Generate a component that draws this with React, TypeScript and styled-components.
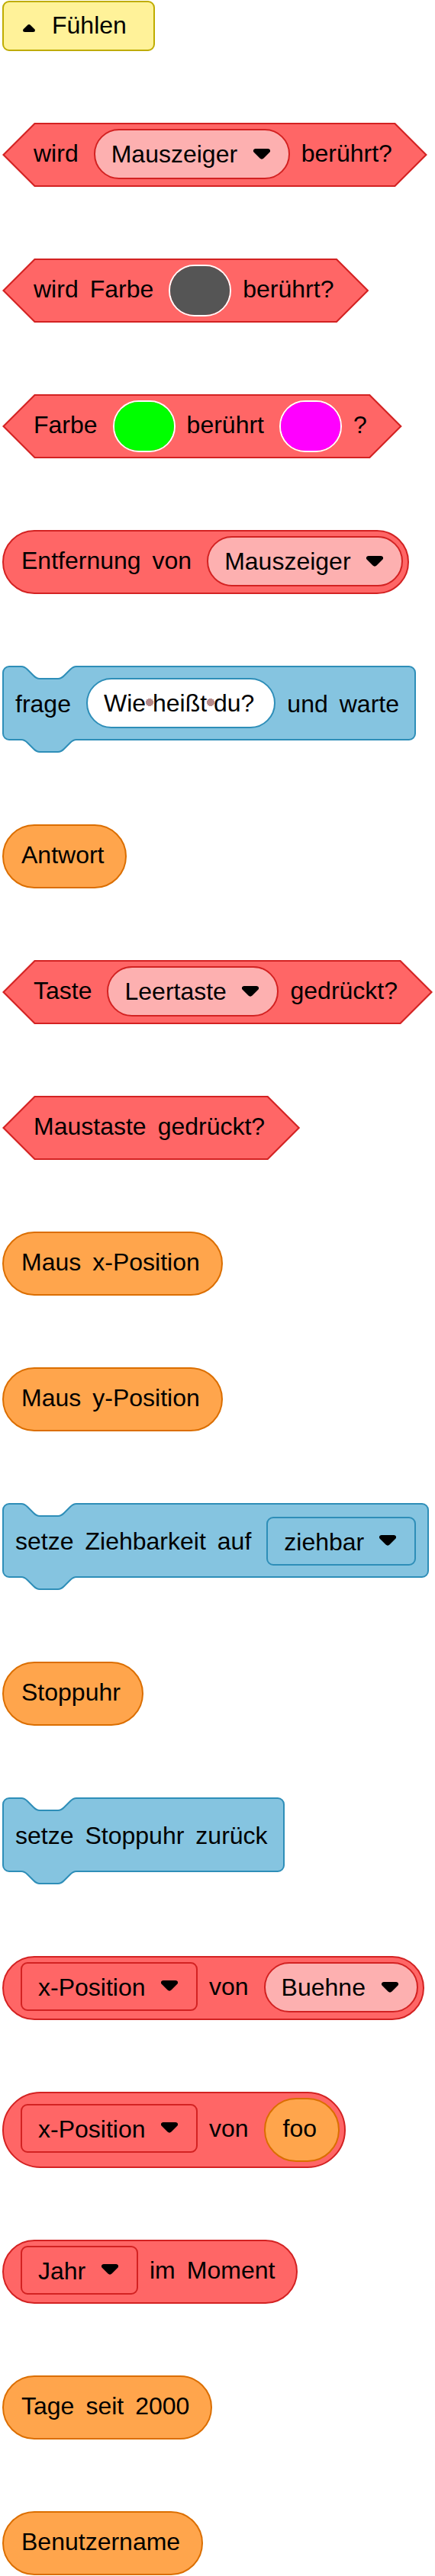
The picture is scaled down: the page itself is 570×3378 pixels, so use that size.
import React from "react";
import styled, { createGlobalStyle, css } from "styled-components";

const colors = {
  red: { fill: "#ff6666", line: "#d32222", field: "#fdb0b0" },
  orange: { fill: "#ffa54c", line: "#db6e00", field: "#ffcc99" },
  blue: { fill: "#85c4e0", line: "#2e8eb8", field: "#ffffff" },
};
type Tone = keyof typeof colors;

const GlobalStyle = createGlobalStyle`
  *, *::before, *::after { box-sizing: border-box; }
  body { margin: 0; background: #ffffff; }
  body, button, input, select {
    color: #000000;
    font-family: "Liberation Sans", Arial, sans-serif;
    font-size: 32px;
    line-height: 36px;
  }
`;

const Palette = styled.main`
  display: flex;
  flex-direction: column;
  align-items: flex-start;
  gap: 94px;
  padding: 1px 3px;
`;

const CategoryButton = styled.button`
  display: flex;
  align-items: center;
  gap: 22px;
  height: 66px;
  padding: 0 35px 2px 25px;
  border: 2px solid #bfac00;
  border-radius: 9px;
  background: #fff299;
`;

const CategoryArrow = styled.svg`
  width: 16px;
  height: 10px;
  margin-top: 8px;
`;

const blockRow = css`
  display: flex;
  align-items: center;
  flex-shrink: 0;
  gap: 15px;
  white-space: nowrap;
`;

const Reporter = styled.div<{ $tone: Tone; $startsWithField?: boolean; $endsWithField?: boolean }>`
  ${blockRow}
  min-height: 84px;
  padding: 6px ${(p) => (p.$endsWithField ? 6 : 23)}px 6px ${(p) => (p.$startsWithField ? 22 : 23)}px;
  border: 2px solid ${(p) => colors[p.$tone].line};
  border-radius: 50px;
  background: ${(p) => colors[p.$tone].fill};
`;

const Predicate = styled.div`
  ${blockRow}
  position: relative;
  isolation: isolate;
  min-height: 84px;
  padding: 8px 41px;
  background: ${colors.red.line};
  clip-path: polygon(0 50%, 42px 0, calc(100% - 42px) 0, 100% 50%, calc(100% - 42px) 100%, 42px 100%);

  &::before {
    content: "";
    position: absolute;
    inset: 0;
    z-index: -1;
    background: ${colors.red.fill};
    clip-path: polygon(
      3px 50%, 43px 2px, calc(100% - 43px) 2px,
      calc(100% - 3px) 50%, calc(100% - 43px) calc(100% - 2px), 43px calc(100% - 2px)
    );
  }
`;

const CommandBody = styled.div`
  ${blockRow}
  position: relative;
  min-height: 98px;
  margin-bottom: 16px;
  padding: 16px 15px 10px 15px;
  border: 2px solid ${colors.blue.line};
  border-radius: 9px;
  background: ${colors.blue.fill};
`;

const Connector = styled.svg<{ $edge: "top" | "bottom" }>`
  position: absolute;
  left: 23px;
  top: ${(p) => (p.$edge === "top" ? "-2px" : "100%")};
  width: 72px;
  height: 18px;
`;

const Label = styled.span`
  display: flex;
  gap: 15px;
  margin-right: 5px;
  padding-bottom: 4px;
`;

const FieldFrame = styled.span<{ $tone: Tone; $round?: boolean }>`
  display: flex;
  align-items: center;
  gap: 20px;
  height: ${(p) => (p.$round ? 66 : 64)}px;
  margin-bottom: ${(p) => (p.$round ? 2 : 4)}px;
  padding: ${(p) => (p.$round ? 0 : 2)}px 24px 0 21px;
  border: 2px solid ${(p) => colors[p.$tone].line};
  border-radius: ${(p) => (p.$round ? 33 : 9)}px;
  background: ${(p) => (p.$round ? colors[p.$tone].field : "transparent")};
`;

const Select = styled.select`
  appearance: none;
  margin: 0;
  padding: 0;
  border: 0;
  background: transparent;
`;

const Caret = styled.svg<{ $round?: boolean }>`
  width: 22px;
  height: 14px;
  margin-bottom: ${(p) => (p.$round ? 0 : 4)}px;
  pointer-events: none;
`;

const Swatch = styled.input`
  appearance: none;
  width: 82px;
  height: 68px;
  margin: 0;
  padding: 0;
  border: 2px solid #ffffff;
  border-radius: 34px;
  overflow: hidden;
  background: none;

  &::-webkit-color-swatch-wrapper { padding: 0; }
  &::-webkit-color-swatch { border: 0; border-radius: 0; }
`;

/* Marks a space character inside the text field. */
const dot = "radial-gradient(circle, #b58a8a 5px, transparent 5px) no-repeat";

const TextInput = styled.input`
  field-sizing: content;
  height: 66px;
  margin: -2px 0 4px;
  padding: 0 26px 0 21px;
  border: 2px solid ${colors.blue.line};
  border-radius: 33px;
  background:
    ${dot} 76px 25px / 10px 10px,
    ${dot} 156px 25px / 10px 10px,
    ${colors.blue.field};
`;

function Words({ children }: { children: string }) {
  return (
    <Label>
      {children.split(" ").map((word) => (
        <span key={word}>{word}</span>
      ))}
    </Label>
  );
}

function Dropdown({ tone = "red", round, name, value }: { tone?: Tone; round?: boolean; name: string; value: string }) {
  return (
    <FieldFrame $tone={tone} $round={round}>
      <Select aria-label={name} defaultValue={value}>
        <option>{value}</option>
      </Select>
      <Caret $round={round} viewBox="0 0 22 14" aria-hidden="true">
        <path d="M3 0H19C22 0 23 3 21 5L13.500 12.500C12 14 10 14 8.500 12.500L1 5C-1 3 0 0 3 0Z" />
      </Caret>
    </FieldFrame>
  );
}

const connectorCurve = "c4 0 6 2 8 4l8 8c2 2 4 4 8 4h24c4 0 6 -2 8 -4l8 -8c2 -2 4 -4 8 -4";

function Command({ children }: { children: React.ReactNode }) {
  return (
    <CommandBody>
      <Connector $edge="top" viewBox="0 0 72 18" aria-hidden="true">
        <path d={`M0 0V1${connectorCurve}V0Z`} fill="#ffffff" />
        <path d={`M0 1${connectorCurve}`} fill="none" stroke={colors.blue.line} strokeWidth="2" />
      </Connector>
      {children}
      <Connector $edge="bottom" viewBox="0 0 72 18" aria-hidden="true">
        <path d={`M0 0V1${connectorCurve}V0Z`} fill={colors.blue.fill} />
        <path d={`M0 1${connectorCurve}`} fill="none" stroke={colors.blue.line} strokeWidth="2" />
      </Connector>
    </CommandBody>
  );
}

export default function App() {
  return (
    <>
      <GlobalStyle />
      <Palette>
        <CategoryButton type="button">
          <CategoryArrow viewBox="0 0 16 10" aria-hidden="true">
            <path d="M6.300 0.800Q8 -0.800 9.700 0.800L15.300 6.200Q17 10 13.500 10H2.500Q-1 10 0.700 6.200Z" />
          </CategoryArrow>
          Fühlen
        </CategoryButton>

        <Predicate>
          <Words>wird</Words>
          <Dropdown round name="Objekt" value="Mauszeiger" />
          <Words>berührt?</Words>
        </Predicate>

        <Predicate>
          <Words>wird Farbe</Words>
          <Swatch type="color" aria-label="Farbe" defaultValue="#555555" />
          <Words>berührt?</Words>
        </Predicate>

        <Predicate>
          <Words>Farbe</Words>
          <Swatch type="color" aria-label="Erste Farbe" defaultValue="#00ff00" />
          <Words>berührt</Words>
          <Swatch type="color" aria-label="Zweite Farbe" defaultValue="#ff00ff" />
          <Words>?</Words>
        </Predicate>

        <Reporter $tone="red" $endsWithField>
          <Words>Entfernung von</Words>
          <Dropdown round name="Ziel" value="Mauszeiger" />
        </Reporter>

        <Command>
          <Words>frage</Words>
          <TextInput type="text" aria-label="Frage" defaultValue="Wie heißt du?" />
          <Words>und warte</Words>
        </Command>

        <Reporter $tone="orange">
          <Words>Antwort</Words>
        </Reporter>

        <Predicate>
          <Words>Taste</Words>
          <Dropdown round name="Taste" value="Leertaste" />
          <Words>gedrückt?</Words>
        </Predicate>

        <Predicate>
          <Words>Maustaste gedrückt?</Words>
        </Predicate>

        <Reporter $tone="orange">
          <Words>Maus x-Position</Words>
        </Reporter>

        <Reporter $tone="orange">
          <Words>Maus y-Position</Words>
        </Reporter>

        <Command>
          <Words>setze Ziehbarkeit auf</Words>
          <Dropdown tone="blue" name="Ziehbarkeit" value="ziehbar" />
        </Command>

        <Reporter $tone="orange">
          <Words>Stoppuhr</Words>
        </Reporter>

        <Command>
          <Words>setze Stoppuhr zurück</Words>
        </Command>

        <Reporter $tone="red" $startsWithField $endsWithField>
          <Dropdown name="Eigenschaft" value="x-Position" />
          <Words>von</Words>
          <Dropdown round name="Objekt" value="Buehne" />
        </Reporter>

        <Reporter $tone="red" $startsWithField $endsWithField>
          <Dropdown name="Eigenschaft" value="x-Position" />
          <Words>von</Words>
          <Reporter $tone="orange">
            <Words>foo</Words>
          </Reporter>
        </Reporter>

        <Reporter $tone="red" $startsWithField>
          <Dropdown name="Zeiteinheit" value="Jahr" />
          <Words>im Moment</Words>
        </Reporter>

        <Reporter $tone="orange">
          <Words>Tage seit 2000</Words>
        </Reporter>

        <Reporter $tone="orange">
          <Words>Benutzername</Words>
        </Reporter>
      </Palette>
    </>
  );
}
